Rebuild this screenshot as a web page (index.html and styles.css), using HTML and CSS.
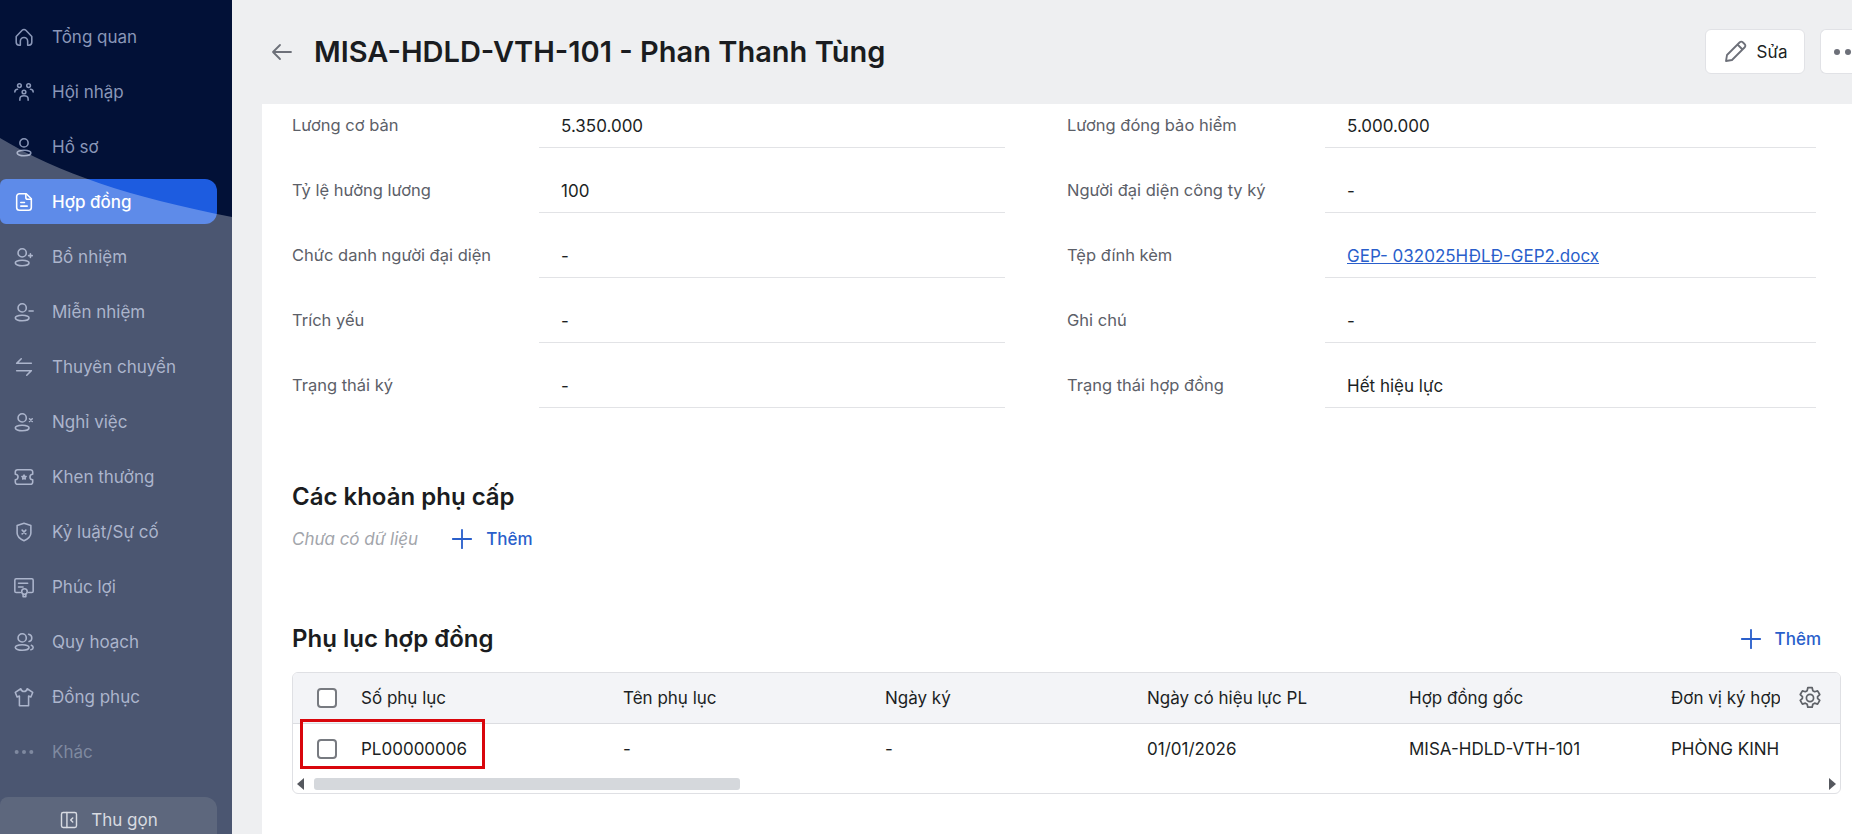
FILE: index.html
```html
<!DOCTYPE html>
<html lang="vi">
<head>
    <meta charset="utf-8">
    <meta name="viewport" content="width=device-width, initial-scale=1.0">
    <title>MISA-HDLD-VTH-101 - Phan Thanh Tùng</title>
    <link rel="stylesheet" href="styles.css">
</head>
<body>
    <aside class="sidebar">
        <nav class="nav">
            <a class="nav-item"><svg class="ico" viewBox="0 0 24 24"><path d="M3.5 11.5 10 4.6a2.8 2.8 0 0 1 4 0l6.500 6.900v6.300a3.200 3.200 0 0 1-3.200 3.200h-1.300v-4.500a4 4 0 0 0-8 0V21H6.700a3.200 3.200 0 0 1-3.200-3.200z"/></svg>Tổng quan</a>
            <a class="nav-item"><svg class="ico" viewBox="0 0 24 24"><circle cx="7" cy="5" r="2"/><circle cx="17" cy="5" r="2"/><circle cx="12" cy="12" r="2"/><path d="M2 12c0-2 1.500-3 3-3M22 12c0-2-1.500-3-3-3M7.500 21v-1.500c0-2 2-3.500 4.500-3.500s4.500 1.500 4.500 3.500V21"/></svg>Hội nhập</a>
            <a class="nav-item"><svg class="ico" viewBox="0 0 24 24"><circle cx="12" cy="7.500" r="4.500"/><ellipse cx="12" cy="18.500" rx="7.500" ry="3"/></svg>Hồ sơ</a>
            <a class="nav-item active"><svg class="ico" viewBox="0 0 24 24"><path d="M7 3h7.500L20 8.500V18a3 3 0 0 1-3 3H7a3 3 0 0 1-3-3V6a3 3 0 0 1 3-3z"/><path d="M14 3.500V7a2 2 0 0 0 2 2h3.500M8.500 12.500h4M8.500 16.500h7"/></svg>Hợp đồng</a>
            <a class="nav-item"><svg class="ico" viewBox="0 0 24 24"><circle cx="10" cy="7.500" r="4.500"/><ellipse cx="10" cy="18.500" rx="7.500" ry="3"/><path d="M19 8.500v4M17 10.500h4"/></svg>Bổ nhiệm</a>
            <a class="nav-item"><svg class="ico" viewBox="0 0 24 24"><circle cx="10" cy="7.500" r="4.500"/><ellipse cx="10" cy="18.500" rx="7.500" ry="3"/><path d="M17.500 11h4.500"/></svg>Miễn nhiệm</a>
            <a class="nav-item"><svg class="ico" viewBox="0 0 24 24"><path d="M9 3 4 8h16M15 21l5-5H4"/></svg>Thuyên chuyển</a>
            <a class="nav-item"><svg class="ico" viewBox="0 0 24 24"><circle cx="10" cy="7.500" r="4.500"/><ellipse cx="10" cy="18.500" rx="7.500" ry="3"/><path d="m18 8.500 3 3M21 8.500l-3 3"/></svg>Nghỉ việc</a>
            <a class="nav-item"><svg class="ico" viewBox="0 0 24 24"><path d="M5 4h14a2.500 2.500 0 0 1 2.500 2.500V9a3 3 0 0 0 0 6v2.500A2.500 2.500 0 0 1 19 20H5a2.500 2.500 0 0 1-2.500-2.500V15a3 3 0 0 0 0-6V6.500A2.500 2.500 0 0 1 5 4z"/><path d="m12 9.800.7 1.500 1.600.2-1.200 1.100.3 1.600-1.400-.8-1.400.8.3-1.600-1.200-1.100 1.600-.2z"/></svg>Khen thưởng</a>
            <a class="nav-item"><svg class="ico" viewBox="0 0 24 24"><path d="M12 2.500 19.500 5v8c0 4-3.500 6.700-7.500 8.500-4-1.800-7.500-4.500-7.500-8.500V5z"/><path d="m10 10 4 4M14 10l-4 4"/></svg>Kỷ luật/Sự cố</a>
            <a class="nav-item"><svg class="ico" viewBox="0 0 24 24"><path d="M8 18H3.500A1.500 1.500 0 0 1 2 16.500v-12A1.500 1.500 0 0 1 3.500 3h17A1.500 1.500 0 0 1 22 4.500v12a1.500 1.500 0 0 1-1.500 1.500H17"/><path d="M6 8h10M6 12h5"/><circle cx="12.500" cy="17" r="3"/><path d="M11 20v2.500h3V20"/></svg>Phúc lợi</a>
            <a class="nav-item"><svg class="ico" viewBox="0 0 24 24"><circle cx="10" cy="7.500" r="4.500"/><ellipse cx="10" cy="18" rx="7.500" ry="3"/><path d="M17 3.500c2.500.5 3.500 2.200 3.500 4s-1 3.500-3 4M20 15.500c1.500.7 2 1.700 2 2.500s-.7 2-2.500 2.500"/></svg>Quy hoạch</a>
            <a class="nav-item"><svg class="ico" viewBox="0 0 24 24"><path d="M8.500 3 2.500 7l2 5 2.500-1v10.500h10V11l2.500 1 2-5-6-4c-.5 2-1.700 3-3.500 3S9 5 8.500 3z"/></svg>Đồng phục</a>
            <a class="nav-item muted"><svg class="ico" viewBox="0 0 24 24"><circle class="dot" cx="4" cy="12" r="2.200"/><circle class="dot" cx="12" cy="12" r="2.200"/><circle class="dot" cx="20" cy="12" r="2.200"/></svg>Khác</a>
        </nav>
        <button class="collapse"><svg class="ico" viewBox="0 0 24 24"><rect x="3" y="3" width="18" height="18" rx="2"/><path d="M9.500 3v18M16.500 9.500 14 12l2.500 2.500"/></svg>Thu gọn</button>
        <svg class="sidebar-sheen" viewBox="0 0 232 834" preserveAspectRatio="none"><path d="M0 138C60 174 130 197 232 217V834H0z"/></svg>
    </aside>

    <main class="main">
        <header class="topbar">
            <svg class="back" viewBox="0 0 24 24"><path d="M21 12H3M10 5l-7 7 7 7"/></svg>
            <h1 class="title">MISA-HDLD-VTH-101 - Phan Thanh Tùng</h1>
            <button class="btn btn-edit"><svg class="btn-ico" viewBox="0 0 24 24"><path d="M3 21l1-6L16.500 2.500a2.500 2.500 0 0 1 3.500 0l1.500 1.500a2.500 2.500 0 0 1 0 3.500L9 20zM14.500 4.500l5 5"/></svg>Sửa</button>
            <button class="btn btn-more"><span class="more-dot"></span><span class="more-dot"></span><span class="more-dot"></span></button>
        </header>

        <div class="content">
            <section class="details">
                <div class="field field-left"><span class="label">Lương cơ bản</span><span class="value">5.350.000</span></div>
                <div class="field field-right"><span class="label">Lương đóng bảo hiểm</span><span class="value">5.000.000</span></div>
                <div class="field field-left"><span class="label">Tỷ lệ hưởng lương</span><span class="value">100</span></div>
                <div class="field field-right"><span class="label">Người đại diện công ty ký</span><span class="value">-</span></div>
                <div class="field field-left"><span class="label">Chức danh người đại diện</span><span class="value">-</span></div>
                <div class="field field-right"><span class="label">Tệp đính kèm</span><span class="value"><a class="file-link">GEP- 032025HĐLĐ-GEP2.docx</a></span></div>
                <div class="field field-left"><span class="label">Trích yếu</span><span class="value">-</span></div>
                <div class="field field-right"><span class="label">Ghi chú</span><span class="value">-</span></div>
                <div class="field field-left"><span class="label">Trạng thái ký</span><span class="value">-</span></div>
                <div class="field field-right"><span class="label">Trạng thái hợp đồng</span><span class="value">Hết hiệu lực</span></div>
            </section>

            <section class="allowance">
                <h2 class="section-title">Các khoản phụ cấp</h2>
                <div class="empty-row">
                    <em class="empty">Chưa có dữ liệu</em>
                    <a class="add"><svg class="plus" viewBox="0 0 24 24"><path d="M12 2v20M2 12h20"/></svg>Thêm</a>
                </div>
            </section>

            <section class="annex">
                <div class="annex-head">
                    <h2 class="section-title">Phụ lục hợp đồng</h2>
                    <a class="add"><svg class="plus" viewBox="0 0 24 24"><path d="M12 2v20M2 12h20"/></svg>Thêm</a>
                </div>
                <div class="table">
                    <div class="table-row table-header">
                        <div class="cells">
                            <div class="cell-check"><span class="checkbox"></span></div>
                            <div class="cell cell-first">Số phụ lục</div>
                            <div class="cell">Tên phụ lục</div>
                            <div class="cell">Ngày ký</div>
                            <div class="cell">Ngày có hiệu lực PL</div>
                            <div class="cell">Hợp đồng gốc</div>
                            <div class="cell">Đơn vị ký hợp đồng</div>
                        </div>
                        <div class="cell-gear"><svg class="gear" viewBox="0 0 24 24"><circle cx="12" cy="12" r="3.300"/><path d="M10 2.500h4l.6 2.700 1.700 1 2.700-.8 2 3.400-2 1.900v1.600l2 1.900-2 3.400-2.700-.8-1.700 1-.6 2.700h-4l-.6-2.700-1.700-1-2.700.8-2-3.400 2-1.900v-1.600l-2-1.900 2-3.400 2.700.8 1.700-1z"/></svg></div>
                    </div>
                    <div class="table-row">
                        <div class="cells">
                            <div class="cell-check"><span class="checkbox"></span></div>
                            <div class="cell cell-first">PL00000006</div>
                            <div class="cell">-</div>
                            <div class="cell">-</div>
                            <div class="cell">01/01/2026</div>
                            <div class="cell">MISA-HDLD-VTH-101</div>
                            <div class="cell">PHÒNG KINH DOANH</div>
                        </div>
                        <div class="cell-gear"></div>
                    </div>
                    <div class="scrollbar">
                        <span class="arrow arrow-left"></span>
                        <div class="scroll-track"><span class="scroll-thumb"></span></div>
                        <span class="arrow arrow-right"></span>
                    </div>
                    <div class="highlight"></div>
                </div>
            </section>
        </div>
    </main>
</body>
</html>
```

FILE: styles.css
```css
* {
    box-sizing: border-box;
}
html, body {
    height: 100%;
}
body {
    margin: 0;
    display: flex;
    overflow: hidden;
    font-family: Inter, "Noto Sans", sans-serif;
    font-size: 17px;
    color: #1c1f24;
    background: #eeeff1;
}

/* sidebar */
.sidebar {
    position: relative;
    flex: 0 0 232px;
    height: 834px;
    overflow: hidden;
    background: #021137;
}
.nav {
    display: flex;
    flex-direction: column;
    gap: 10px;
    padding-top: 14px;
}
.nav-item {
    display: flex;
    align-items: center;
    gap: 17px;
    height: 45px;
    width: 217px;
    padding-left: 13px;
    font-size: 17px;
    color: #8a97b8;
}
.nav-item .ico {
    flex: 0 0 22px;
    width: 22px;
    height: 22px;
}
.nav-item.active {
    background: #1d5ce0;
    color: #fff;
    font-weight: 500;
    border-radius: 6px 12px 12px 6px;
}
.nav-item.muted {
    color: #4b5a79;
}
.ico {
    fill: none;
    stroke: currentColor;
    stroke-width: 1.700;
    stroke-linecap: round;
    stroke-linejoin: round;
}
.ico .dot {
    fill: currentColor;
    stroke: none;
}
.collapse {
    display: flex;
    align-items: center;
    justify-content: center;
    gap: 12px;
    width: 217px;
    height: 45px;
    margin-top: 23px;
    border: 0;
    border-radius: 8px 12px 0 0;
    background: #1c2a49;
    color: #c8ccd6;
    font-family: inherit;
    font-size: 17px;
}
.collapse .ico {
    width: 20px;
    height: 20px;
}
.sidebar-sheen {
    position: absolute;
    inset: 0;
    width: 232px;
    height: 834px;
    fill: rgba(255, 255, 255, 0.29);
    pointer-events: none;
}

/* main */
.main {
    flex: 1;
    min-width: 0;
    display: flex;
    flex-direction: column;
    height: 834px;
}
.topbar {
    flex: 0 0 104px;
    display: flex;
    align-items: center;
    padding: 17px 0 18px 38px;
    white-space: nowrap;
}
.back {
    flex: 0 0 24px;
    height: 24px;
    margin-right: 20px;
    fill: none;
    stroke: #6d7079;
    stroke-width: 1.800;
    stroke-linecap: round;
    stroke-linejoin: round;
}
.title {
    flex: 1;
    margin: 0;
    font-size: 29px;
    font-weight: 600;
    color: #1a1c20;
}
.btn {
    display: flex;
    align-items: center;
    height: 45px;
    background: #fff;
    border: 1px solid #e1e2e6;
    border-radius: 6px;
    font-family: inherit;
    font-size: 17px;
    color: #1c1f24;
}
.btn-edit {
    flex: 0 0 100px;
    justify-content: center;
    gap: 10px;
    margin-right: 15px;
}
.btn-ico {
    width: 24px;
    height: 24px;
    fill: none;
    stroke: #6d7079;
    stroke-width: 1.800;
    stroke-linejoin: round;
}
.btn-more {
    flex: 0 0 32px;
    gap: 5px;
    padding: 0 0 0 13px;
    border-radius: 6px 0 0 6px;
    border-right: 0;
    overflow: hidden;
}
.more-dot {
    flex: 0 0 6px;
    height: 6px;
    border-radius: 50%;
    background: #6d7079;
}
.content {
    flex: 1;
    min-height: 0;
    margin-left: 30px;
    padding-left: 30px;
    overflow: hidden;
    background: #fff;
}

/* detail fields */
.details {
    display: grid;
    grid-template-columns: 713px 749px;
    column-gap: 62px;
    row-gap: 21px;
}
.field {
    display: flex;
    height: 44px;
}
.label {
    display: flex;
    align-items: center;
    color: #5c6068;
    font-size: 16.500px;
    padding-bottom: 2px;
}
.field-left .label {
    flex: 0 0 247px;
}
.field-right .label {
    flex: 0 0 258px;
}
.value {
    flex: 1;
    display: flex;
    align-items: center;
    padding-left: 22px;
    border-bottom: 1px solid #e2e3e6;
}
.file-link {
    color: #2a5fcb;
    text-decoration: underline;
}

/* sections */
.allowance {
    padding-top: 70px;
}
.section-title {
    margin: 0;
    font-size: 24px;
    font-weight: 600;
    line-height: 38px;
    color: #1a1c20;
}
.empty-row {
    display: flex;
    align-items: center;
    gap: 33px;
    margin-top: 12px;
}
.empty {
    color: #a2a5ab;
}
.add {
    display: flex;
    align-items: center;
    gap: 13px;
    color: #2a5fcb;
    font-weight: 500;
}
.plus {
    width: 22px;
    height: 22px;
    fill: none;
    stroke: #2a5fcb;
    stroke-width: 2;
    stroke-linecap: round;
}
.annex {
    padding-top: 70px;
}
.annex-head {
    display: flex;
    align-items: center;
    justify-content: space-between;
    width: 1529px;
    margin-bottom: 14px;
}

/* table */
.table {
    position: relative;
    width: 1549px;
    border: 1px solid #dfe0e4;
    border-radius: 6px;
    overflow: hidden;
}
.table-row {
    display: flex;
    height: 50px;
}
.table-header {
    height: 51px;
    background: #f3f4f7;
    border-bottom: 1px solid #dcdde1;
}
.cells {
    display: flex;
    flex: 0 0 1487px;
    overflow: hidden;
    align-items: center;
}
.cell-check {
    flex: 0 0 25px;
    margin-left: 24px;
    display: flex;
}
.checkbox {
    width: 20px;
    height: 20px;
    border: 2px solid #777a80;
    border-radius: 4px;
    background: #fff;
}
.cell {
    flex: 0 0 262px;
    padding-right: 16px;
    white-space: nowrap;
}
.cell-first {
    margin-left: 19px;
}
.cell-gear {
    flex: 1;
    display: flex;
    align-items: center;
    justify-content: center;
}
.gear {
    width: 26px;
    height: 26px;
    fill: none;
    stroke: #5f6268;
    stroke-width: 1.600;
    stroke-linejoin: round;
}
.scrollbar {
    display: flex;
    align-items: center;
    height: 19px;
    padding: 0 4px;
}
.arrow {
    width: 0;
    height: 0;
    border-top: 6px solid transparent;
    border-bottom: 6px solid transparent;
}
.arrow-left {
    border-right: 7px solid #55585e;
}
.arrow-right {
    border-left: 7px solid #55585e;
}
.scroll-track {
    flex: 1;
    padding-left: 10px;
}
.scroll-thumb {
    display: block;
    width: 426px;
    height: 12px;
    border-radius: 3px;
    background: #d5d8dc;
}
.highlight {
    position: absolute;
    left: 7px;
    top: 46px;
    width: 185px;
    height: 50px;
    border: 3px solid #d9060c;
    pointer-events: none;
}
```
